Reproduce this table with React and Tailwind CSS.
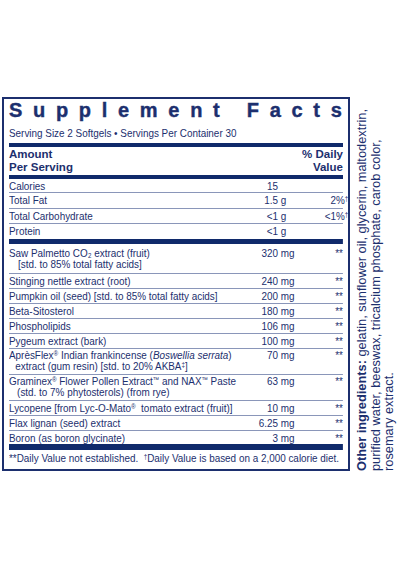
import React from "react";

function Row({ children, num, unit, dv, cls }) {
  return (
    <div className={cls}>
      <div className="min-w-0 flex-1">{children}</div>
      <div className="w-[42px] text-right">{num}</div>
      <div className="w-[24px] pl-[3px]">{unit}</div>
      <div className="w-[48px] text-right">{dv}</div>
    </div>
  );
}

const single = "flex border-b border-[#8a96b9] py-[1px] leading-[12px] whitespace-nowrap";
const dbl = "flex border-b border-[#8a96b9] pt-[1px] pb-[2px] leading-[11px] whitespace-nowrap";
const sup = "text-[7px]";

export default function App() {
  return (
    <div className="h-[570px] w-[400px] overflow-hidden bg-white font-['Liberation_Sans',Arial,sans-serif] text-[11px] text-[#1c2f6e]">
      <div className="flex items-end pl-[2px] pt-[96px]">
        <div className="w-[348px] shrink-0 border-2 border-[#1c2f6e] px-[5px]">
          <div className="mt-[2px] whitespace-nowrap text-[20px] font-bold leading-[19px] tracking-[10.7px] [-webkit-text-stroke:0.4px_#1c2f6e]">
            Supplement Facts
          </div>
          <div className="mt-[7px] w-[371px] origin-left scale-x-[0.9] whitespace-nowrap leading-[13px]">
            Serving Size 2 Softgels • Servings Per Container 30
          </div>
          <div className="mt-[3px] h-[4px] bg-[#102a6b]" />
          <div className="flex justify-between pt-[1px] text-[11.5px] font-bold leading-[13px]">
            <div>
              Amount
              <br />
              Per Serving
            </div>
            <div className="text-right">
              % Daily
              <br />
              Value
            </div>
          </div>
          <div className="mt-[1px] h-[4px] bg-[#102a6b]" />

          <div className="w-[371px] origin-left scale-x-[0.9]">
            <Row cls="flex border-b border-[#8a96b9] pt-[1px] leading-[12px]" num="15">Calories</Row>
            <Row cls="flex border-b border-[#8a96b9] py-[1px] leading-[13px]" num="1.5" unit="g" dv={<span>2%<sup className={"mr-[-6px] " + sup}>†</sup></span>}>Total Fat</Row>
            <Row cls={single} num="<1" unit="g" dv={<span>&lt;1%<sup className={"mr-[-6px] " + sup}>†</sup></span>}>Total Carbohydrate</Row>
            <Row cls="flex py-[1px] leading-[13px]" num="<1" unit="g">Protein</Row>
            <div className="h-[5px] bg-[#102a6b]" />

            <Row cls="flex border-b border-[#8a96b9] pt-[4px] pb-[3px] leading-[11px] whitespace-nowrap" num="320" unit="mg" dv="**">
              <div>Saw Palmetto CO₂ extract (fruit)</div>
              <div className="pl-[10px]">[std. to 85% total fatty acids]</div>
            </Row>
            <Row cls={single} num="240" unit="mg" dv="**">Stinging nettle extract (root)</Row>
            <Row cls={single} num="200" unit="mg" dv="**">Pumpkin oil (seed) [std. to 85% total fatty acids]</Row>
            <Row cls={single} num="180" unit="mg" dv="**">Beta-Sitosterol</Row>
            <Row cls={single} num="106" unit="mg" dv="**">Phospholipids</Row>
            <Row cls={single} num="100" unit="mg" dv="**">Pygeum extract (bark)</Row>
            <Row cls={dbl} num="70" unit="mg" dv="**">
              <div>
                AprèsFlex<sup className={sup}>®</sup> Indian frankincense (<i>Boswellia serrata</i>)
              </div>
              <div className="pl-[7px]">
                extract (gum resin) [std. to 20% AKBA<sup className={sup}>‡</sup>]
              </div>
            </Row>
            <Row cls={dbl} num="63" unit="mg" dv="**">
              <div>
                Graminex<sup className={sup}>®</sup> Flower Pollen Extract<sup className={sup}>™</sup> and NAX
                <sup className={sup}>™</sup> Paste
              </div>
              <div className="pl-[9px]">(std. to 7% phytosterols) (from rye)</div>
            </Row>
            <Row cls={single} num="10" unit="mg" dv="**">
              Lycopene [from Lyc-O-Mato<sup className={sup}>®</sup>&nbsp; tomato extract (fruit)]
            </Row>
            <Row cls={single} num="6.25" unit="mg" dv="**">Flax lignan (seed) extract</Row>
            <Row cls="flex pt-[1px] leading-[12px]" num="3" unit="mg" dv="**">Boron (as boron glycinate)</Row>
            <div className="h-[6px] bg-[#102a6b]" />
            <div className="mt-[2px] whitespace-nowrap pb-[4px] leading-[13px]">
              **Daily Value not established.&nbsp; <sup className={sup}>†</sup>Daily Value is based on a 2,000 calorie diet.
            </div>
          </div>
        </div>

        <div className="ml-[5px] h-[375px] rotate-180 whitespace-nowrap text-[12.8px] leading-[13.5px] text-[#1c2f6e] [writing-mode:vertical-rl]">
          <b>Other ingredients:</b> gelatin, sunflower oil, glycerin, maltodextrin,
          <br />
          purified water, beeswax, tricalcium phosphate, carob color,
          <br />
          rosemary extract.
        </div>
      </div>
    </div>
  );
}
